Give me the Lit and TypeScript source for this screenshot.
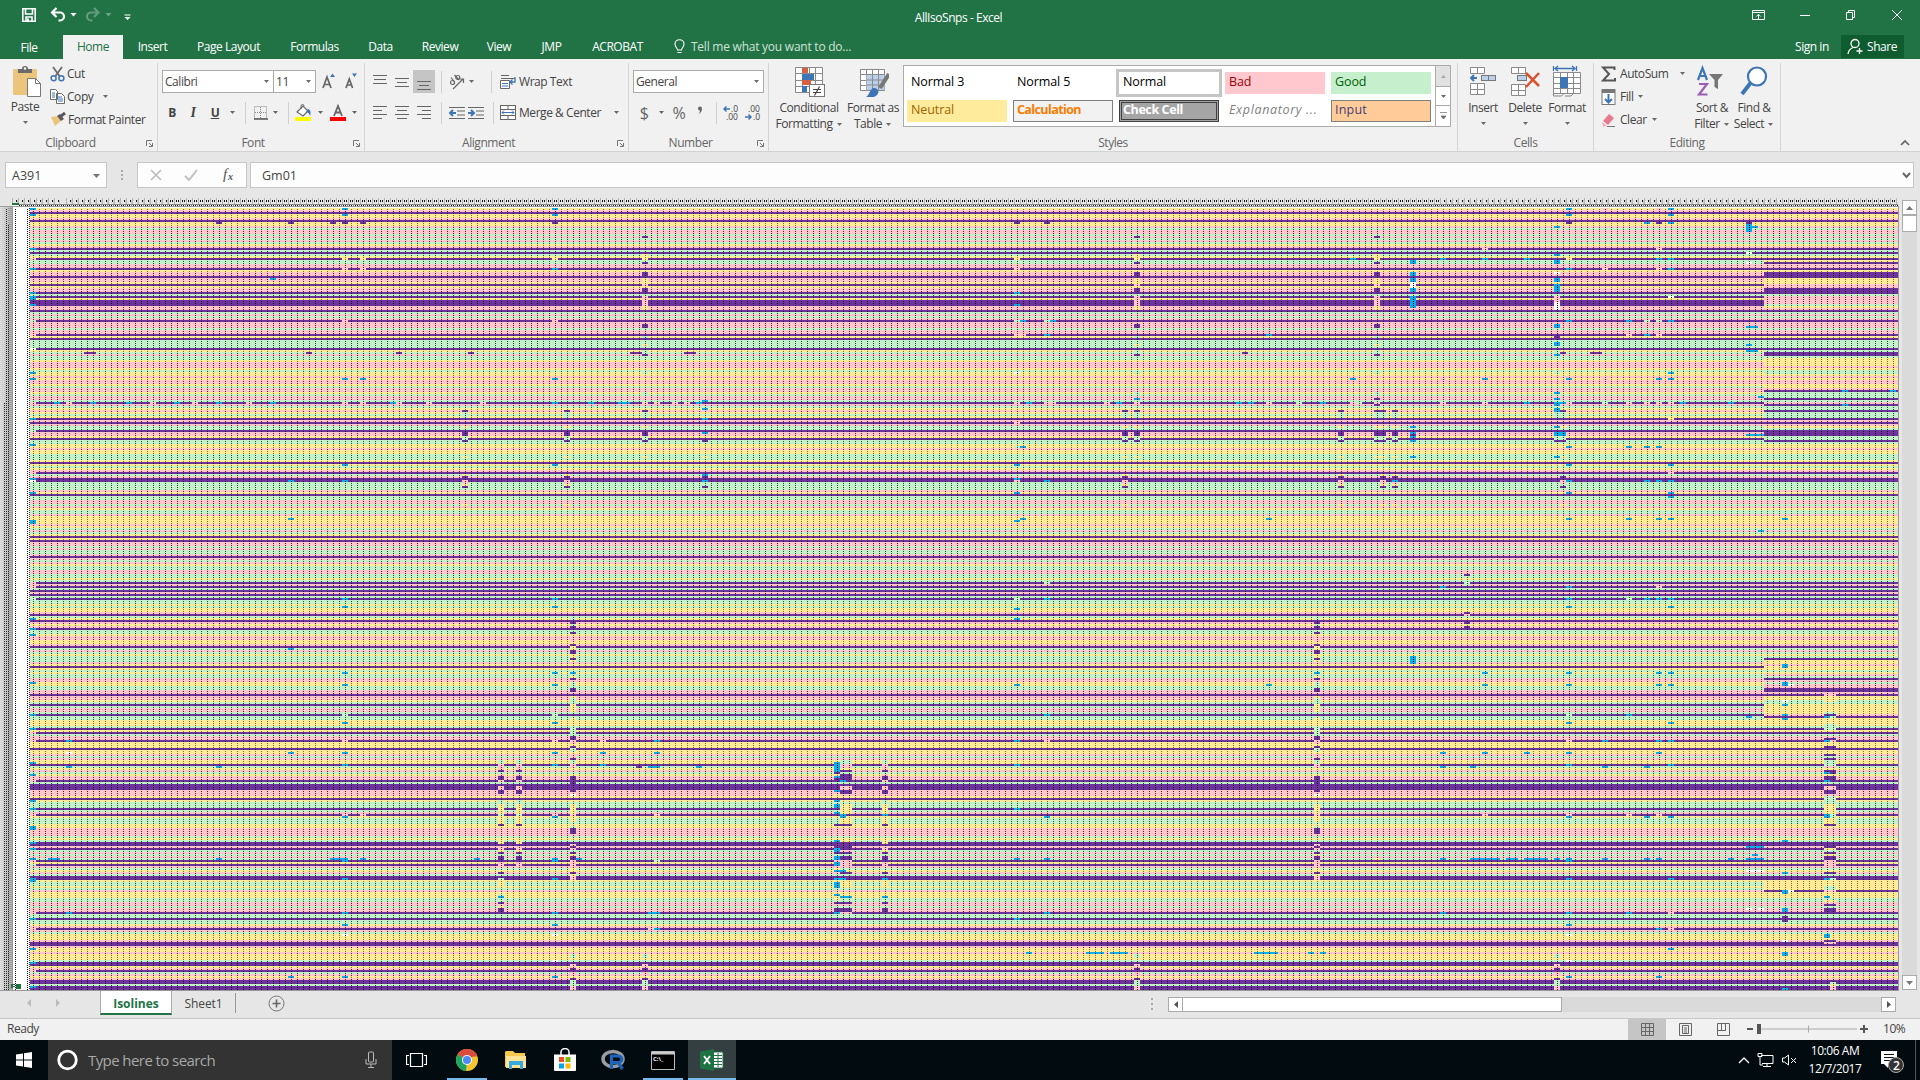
import { LitElement, html, css, svg } from "lit";
import { customElement } from "lit/decorators.js";

/* ---------- sheet data ---------- */
/* y neutral, k bad, g good, P purple fill, b blue fill, w blank */
const FILL: Record<string, [string, string]> = {
  y: ["#ffeb9c", "#9c6500"],
  k: ["#ffc7ce", "#9c0006"],
  g: ["#c6efce", "#006100"],
  P: ["#7030a0", "#000000"],
  b: ["#00b0f0", "#000000"],
  w: ["#ffffff", "#000000"],
};

const ROWS = (
  "ykPyykPyykgkkgkgkgykPgPgyPggkkPykkPkkyPykkPgPyPPPkkPgkgkPkkkgkkPyPggggPygkggykkkygyykykkygkkygkkgPkgykygyPkPkggPkkyPggyyk" +
  "yygggyPygykPgkPPggggkyPggkkgkyggkyyyykygkgyPyPkkgkggkPkgkyggkkggygPkPgPkPgPggygyykPgyPkykPggykkyykPgkgygggkyPygyggkkyyggkkPkkygPgkkgPgg" +
  "yyygPyPgkkPyyyPyykgkyyPgykgykkPgPPPkkkyPygggPgkPygggyykkkkgygPPkPgkgkgPyPkgykgPPyggygkyyyggkkgkkPggPggykPkgyyykPPkyykyyygPPykPgkykPPgPP"
).split("");

const RIGHT_COL = 289;
const COLS = 312;
const RIGHT: [number, string][] = [
  [26, "yPkkPyPPPyyykkPPPgkkkkgyk"],
  [71, "gPPgyyyykyggykykkyykPgggPgkPggPggg"],
  [108, "kygPPPggP"],
  [225, "Pyykyygykg"],
  [235, "PkgkkPPkPyyggyyyyykPyyyy"],
  [336, "yyyyyP"],
];

const BAND = "23y3 27P 32P2 35y3 38k 40P2 44k5 49y2";
const A = "101P 102g3 109y 112P2 114g2 116P 124y";
const B = A + " 133y 134P 136k2 138y 139P 148y";
const C = "14P " + BAND + " 58P2 64g 68y 71g 73P 82g 92g 97k " + A;
const TAIL = " 373g2 378k2 380P 382k 385P 386g3 389k2";
const D =
  " 204g2 207P 208g 209P 212P 214k3 218P 219y2 221P2 223y2 225P 226y 232b 234y 235P 237g2 240P2 244y 245g3 248y4 255y 259g5 264P2 266k2 269P 270g2 274k 275P 276g2 278k2 284P2 286P2 288P3 291P 293w 298y5 303k 304y3 309g 310P3 318k 319P 320k 322P 323y 324P2 326k3 330y 332P 333y 334k2";
const E = "276g2 278k2 280k 281P 283k 284P2 286k 289k2 291P2 296g 298y5 303g 305y3 308P 316y2 318P 320k 321y 322P 324P3 327k2";
const F = "276g2 278k2 281P 283P3 289k2 291P2 298y5 305y3 308P 316y 318P3 321k 322P 324P2 326k4 332P 336y3 344b 347P 350P2 352k";
const G = " 195b 199b 232b 238b 253g 257b 266k 272b 278b 303k 304b 325b2 335b 352b 358b 363w 376w 384b";

const MARKS: Record<number, string> = {
  0: "0b 3b 20b 25k 30b 42b 44b2 48b 56g 63k 70w 82b 85b 97k 105b 111g 118b 132k 135b 136w 142b 156b2 187k 189k 195g 205b 210b 213b 237b 253b 260b 262k 266k 277b 283b 286k 296b 300b 303k 309b2 317b 320b 325b 326k 328g 335b2 352k 355b 360k 370b 377b 381k 389b",
  3: "325b:2", 4: "97b", 6: "97k 266b 272w 279b 352b", 9: "72P:2", 10: "97b", 16: "97b", 20: "97k", 24: "97b", 27: "97k",
  31: "7P 97b 279b 325b", 36: "97k", 40: "35b 97b", 43: "7P 136b 155b 220b 272b 384b", 46: "72P", 50: "7P 325b:3",
  52: "0b 3b 7P 25y 30k 56k 85b 97k 128b 136b" + G, 55: "7P 25y 30k 85b 97k 303k 325b", 60: "97b", 61: "72P 97k", 66: "97k",
  72: B, 73: "72P", 74: "325b", 75: "97k", 78: E + " 332P 335g 336y3 343g 344b 347P 349y 350P2", 81: E,
  87: "0b 3b 7P 25y 30b 56k 85b 97b 128b" + G, 89: B, 90: D + TAIL, 91: "325b", 93: "97b", 95: "266k 272b 278b", 98: "97b:2",
  100: "72P:2", 101: "279P", 102: C + TAIL, 103: "279b:2 352b:2 360k", 104: "97k 266b 272b 303k 326g 360b",
  107: "97k", 109: "72P:2 97k", 111: "97b 279b", 112: "96b 100b 105b 112b 116P 124y 133b 134P 136b 139P",
  134: "277b6 282P 284b 285P 291b 293y 296b 298b2 302b 304y 308P 316b 319P 320b2 322P 324b2 326k 327b2 330y 331b:2 335b:2 337b3 343b 345y 347P 350P2 352b",
  135: F + " 286b 303b2", 136: F, 142: E + " 303b 332P 335b 336y3 344b 347P 350P2",
  164: "7P 25y 30k 42b 48b 56g 63k 82w 97k 107k 119g 128b 135b 136k 142b 156b 195g 200b 205b 238b 266b 278b 300b 325b 355b",
  165: "56b 63k 119b 155b", 166: "97b 372b",
  169: "7P 56g 63b 97k 136b 187g 195b 253b 266k 304b 325b 352b", 170: "56b 97k", 176: "372b:3", 179: "97k", 180: "372b:3", 181: "97b 372b",
  182: B, 184: C + " 95b" + TAIL, 201: "97b", 202: "72P", 203: "97b", 204: "372b:2", 206: "63b 97k 155b 238b 372b:2",
  211: "97g", 213: "372b", 214: D, 215: "97b 372b", 218: B, 220: "25b 85b 97k", 221: "97g", 224: C + " 95P 98P" + " 325y", 225: B, 227: B + " 136b",
  230: "26b2 32b2 35b2 37w3 40b2 44b6 109b 112b 113P 114b 116b 124b 224b4",
  235: "25b 85k 97k 189b 272b 279b 325b 352b", 239: "183P 187g2 202P 203k 207P 209P2", 240: "325b:2 279b",
  242: "20k 25b 85b 97k 232b 238b 272b 303k 325b:3", 246: "325b:2", 249: "25b 97b 272b 325b:4",
  254: "9b 23b 26b2 32w 35b2 38b2 40b2 44k3 47w4 58b2 64P 67b2 71g 73b 82g 92b 95b 97b 98b 100b2 102g3 109b 112b2 114g2 116P 124b 325b" + TAIL,
  255: "72P 97b 101P 102g3 109y 112b2 114g2 116P 124y 134P 136k2 139P 148y",
  256: "0b 3b 7P 25y 30b 56b 85b 97k 119b 128b 136b 142b 155b 189b" + G, 260: "72P:2",
  262: "0k 30k 85k 97g 266b 279b 325b", 266: "56b 63k 97k 119b 155b 195g 253b 303k 352b", 269: "7b 56g 63b 97k 119b 136b 195b 279b 304b 325b",
  271: "0k 7P 20k 25b 30k 56g 63k 85b 97k 119b 136b 155b 189k 195b 232b 238b 266b 272b 303k 325b 360b 384b",
  273: "0b 3b 7b 25b 30b 44w 56b 82b 85b 97k 105y 128b 132k 136b 142b 144b 155b 195b 199b 232b 238b 257b 266b 278b 304b 335b 352k 360k2 370b",
  275: "97b", 283: "97b 325b", 286: "7P 8b4 22w 27w 59b:2 68b 71b:2 113b:3 254b 319b:3 325b:3 331w:3 350w", 287: "9b 323b", 288: "94b 161b 350w",
  292: "155b 228b2 235P 237b2 246w 248b 253b 255b 316b 318P 332b 341b2 350b2 354P 356P 366w 372b2 390b", 293: "341w 238w",
  299: "243k:2 244y3:2 252g:2 253P2:2 254b 258g3:2 265P:2 266b 269P:2 273P:2 275P:2 276g3:2 279k:2 281P2:2 282b 284P2:2 286b 289k2:2 291P2:2 294g4:2 298y10:2 303b2 308P:2 319P:2 320y:2 322P:2 323y:2 324P2:2 326k3:2 332P:2 335b 339g3:2 341k:2 344b 346y:2 348P:2 350P2:2 363b2 366P:2 367k:2 368P:2",
  300: "254g 266k 303g2 335g 387g 388y 389k2", 302: "91b 98b", 310: "91b",
};

interface Block { c: number; r: number; w: number; h: number; k: string }

function runs(rows: string[], start: number, c: number, w: number): Block[] {
  const out: Block[] = [];
  rows.forEach((k, i) => {
    const last = out[out.length - 1];
    if (last && last.k === k) last.h++;
    else out.push({ c, r: start + i, w, h: 1, k });
  });
  return out;
}

function marks(): Block[] {
  const out: Block[] = [];
  for (const [c, text] of Object.entries(MARKS)) {
    for (const token of text.trim().split(/\s+/)) {
      const m = /^(\d+)([a-zA-Z])(\d*)(?::(\d+))?$/.exec(token);
      if (m) out.push({ c: +c, r: +m[1], k: m[2], h: +(m[3] || 1), w: +(m[4] || 1) });
    }
  }
  return out;
}

const BLOCKS: Block[] = [
  ...runs(ROWS.slice(0, 391), 0, 0, COLS),
  ...RIGHT.flatMap(([r, s]) => runs(s.split(""), r, RIGHT_COL, COLS - RIGHT_COL)),
  ...marks(),
];

const GREY = "#6a6a6a";
const BLUE = "#3e76b5";

const ic = (w: number, h: number, body: unknown) =>
  html`<svg class="ic" width=${w} height=${h} viewBox="0 0 ${w} ${h}">${body}</svg>`;
const car = (c = "#6a6a6a") => ic(7, 5, svg`<path d="M1 1h5L3.500 4z" fill=${c} />`);
const launch = () => html`<svg class="launch" width="9" height="9" viewBox="0 0 9 9"><path d="M1.500 7V1.500H7M4 4l3 3M7.500 4v3.500H4" fill="none" stroke="#777" /></svg>`;
const lines = (ys: number[], xs: [number, number][]) =>
  ic(16, 16, ys.map((y, i) => svg`<path d="M${xs[i % xs.length][0]} ${y + 0.5}H${xs[i % xs.length][1]}" stroke="#666" />`));

@customElement("sheet-map")
export class SheetMap extends LitElement {
  static styles = css`
    :host { display: block; }
    svg { display: block; }
  `;
  render() {
    return html`<svg width="1900" height="793" viewBox="0 0 1900 793" shape-rendering="crispEdges">
      <defs>
        <linearGradient id="rh"><stop offset="0" stop-color="#e6e6e6" /><stop offset="1" stop-color="#b4b4b4" /></linearGradient>
        ${Object.entries(FILL).map(([k, [bg, dot]]) => svg`
          <pattern id="p${k}" width="6" height="2" patternUnits="userSpaceOnUse" x="30" y="10">
            <rect width="6" height="2" fill=${bg} /><rect x="3" y="1" width="1" height="1" fill=${dot} />
          </pattern>`)}
        <pattern id="ch" width="6" height="10" patternUnits="userSpaceOnUse" x="12" y="0">
          <rect x="0" y="0" width="1" height="6" fill="#b4b4b4" /><rect x="5" y="2" width="1" height="4" fill="#cfcfcf" />
          <rect x="4" y="2" width="1" height="2" fill="#111" />
        </pattern>
        <pattern id="ch2" width="6" height="10" patternUnits="userSpaceOnUse" x="12" y="0">
          <rect x="0" y="0" width="1" height="6" fill="#b4b4b4" />
          <rect x="2" y="2" width="1" height="2" fill="#111" /><rect x="4" y="2" width="1" height="2" fill="#111" />
        </pattern>
        <pattern id="tr" width="6" height="4" patternUnits="userSpaceOnUse" x="12" y="7">
          <rect x="1" y="0" width="1" height="1" fill="#111" /><rect x="3" y="0" width="1" height="1" fill="#111" /><rect x="5" y="0" width="1" height="1" fill="#777" />
        </pattern>
        <pattern id="rt" width="13" height="2" patternUnits="userSpaceOnUse" y="10">
          <rect width="12" height="1" fill="#bdbdbd" opacity=".5" /><rect x="8" width="4" height="1" fill="#999" /><rect x="6" y="1" width="1" height="1" fill="#222" />
        </pattern>
        <pattern id="rt2" width="13" height="2" patternUnits="userSpaceOnUse" y="10">
          <rect x="8" y="1" width="1" height="1" fill="#222" />
        </pattern>
        <pattern id="rt3" width="13" height="2" patternUnits="userSpaceOnUse" y="10">
          <rect x="4" y="1" width="1" height="1" fill="#222" />
        </pattern>
        <pattern id="wd" width="18" height="2" patternUnits="userSpaceOnUse" x="13" y="10">
          <rect x="2" y="1" width="1" height="1" fill="#111" /><rect x="14" y="1" width="1" height="1" fill="#111" /><rect x="16" y="0" width="1" height="1" fill="#333" />
        </pattern>
      </defs>
      <rect x="12" y="0" width="1886" height="6" fill="#e6e6e6" />
      <rect x="12" y="0" width="48" height="6" fill="url(#ch)" />
      <rect x="66" y="0" width="102" height="6" fill="url(#ch)" />
      <rect x="168" y="0" width="1272" height="6" fill="url(#ch2)" />
      <rect x="1440" y="0" width="340" height="6" fill="url(#ch)" />
      <rect x="1780" y="0" width="118" height="6" fill="url(#ch2)" />
      <rect x="12" y="5" width="7" height="2" fill="#217346" />
      <rect x="19" y="6" width="1879" height="1" fill="#888" />
      <rect x="13" y="7" width="1885" height="1" fill="#fff" />
      <rect x="19" y="7" width="1879" height="1" fill="url(#tr)" />
      <rect x="0" y="8" width="1899" height="1" fill="#999" />
      <rect x="0" y="9" width="13" height="783" fill="url(#rh)" />
      <rect x="0" y="10" width="12" height="782" fill="url(#rt)" />
      <rect x="0" y="26" width="12" height="766" fill="url(#rt2)" />
      <rect x="0" y="204" width="12" height="588" fill="url(#rt3)" />
      <rect x="12" y="9" width="1" height="783" fill="#999" />
      <rect x="13" y="9" width="1885" height="783" fill="#fff" />
      <rect x="13" y="10" width="17" height="782" fill="url(#wd)" />
      ${BLOCKS.map((b) => svg`<rect x=${30 + b.c * 6} y=${10 + b.r * 2} width=${Math.min(b.w * 6, 1898 - 30 - b.c * 6)} height=${b.h * 2} fill="url(#p${b.k})" />`)}
      <rect x="1898" y="8" width="1" height="784" fill="#999" />
      <path d="M11 786h4v1h-2v1h2v1h-2v1h-2z" fill="#217346" />
      <rect x="16" y="786" width="5" height="5" fill="#217346" />
      <rect x="0" y="792" width="1899" height="1" fill="#999" />
    </svg>`;
  }
}

@customElement("app-root")
export class AppRoot extends LitElement {
  static styles = css`
    :host { display: block; width: 1920px; height: 1080px; overflow: hidden; background: #e6e6e6; color: #444;
      font: 12px/16px "Open Sans", "Noto Sans", sans-serif; letter-spacing: -0.45px; white-space: nowrap; }
    * { box-sizing: border-box; }
    .ic, .launch { display: block; flex: none; }
    svg text { letter-spacing: 0; }
    .row { display: flex; align-items: center; }
    .col { display: flex; flex-direction: column; align-items: center; }
    .top { background: #217346; height: 59px; color: #fff; }
    .title { height: 35px; display: grid; grid-template-columns: 140px 1600px 180px; align-items: center; }
    .title .name { text-align: center; padding-left: 37px; }
    .tabs { display: flex; height: 24px; align-items: center; }
    .tab { text-align: center; flex: none; height: 24px; line-height: 24px; }
    .t0 { width: 63px; padding-right: 5px; line-height: 26px; } .t1 { width: 60px; background: #f1f1f1; color: #217346; }
    .t2 { width: 59px; } .t3 { width: 93px; } .t4 { width: 79px; } .t5 { width: 53px; } .t6 { width: 66px; }
    .t7 { width: 52px; } .t8 { width: 53px; } .t9 { width: 79px; }
    .bulb { margin-left: 17px; } .tell { margin-left: 6px; color: #cfe3d7; width: 1104px; letter-spacing: -.24px; }
    .sign { width: 46px; } .share { background: #0e5c2f; width: 63px; height: 23px; align-self: flex-start; gap: 3px; padding-left: 6px; }
    .ribbon { display: flex; height: 93px; background: #f1f1f1; border-bottom: 1px solid #d2d2d2; }
    .group { position: relative; flex: none; height: 88px; margin-top: 4px; border-right: 1px solid #d5d5d5; display: flex; flex-direction: column; }
    .body { height: 71px; display: flex; }
    .label { text-align: center; color: #666; line-height: 17px; padding-top: 2px; }
    .launch { position: absolute; right: 3px; bottom: 3px; }
    .g1 { width: 158px; } .g2 { width: 207px; } .g3 { width: 264px; } .g4 { width: 140px; } .g5 { width: 689px; } .g6 { width: 136px; } .g7 { width: 187px; }
    .g1 .label, .g2 .label, .g3 .label, .g4 .label { padding-right: 16px; }
    .paste { width: 50px; padding-top: 2px; } .paste .ic:last-child { margin-top: 5px; }
    .stack { display: flex; flex-direction: column; margin-top: -1px; }
    .stack .row { height: 23px; gap: 2px; }
    .two { flex-direction: column; padding: 7px 0 0 4px; gap: 8px; }
    .two .row { height: 23px; }
    .box { height: 23px; border: 1px solid #ababab; background: #fff; display: flex; align-items: center; justify-content: space-between; padding: 0 3px 0 2px; }
    .b1 { width: 112px; } .b2 { width: 43px; margin-left: -1px; } .b3 { width: 131px; }
    .vs { width: 1px; height: 22px; background: #d0d0d0; flex: none; }
    .k { display: flex; justify-content: center; align-items: center; flex: none; height: 23px; }
    .w13 { width: 13px; } .w17 { width: 17px; } .w20 { width: 20px; } .w22 { width: 22px; }
    .sep2 { padding-left: 5px; }
    .on { background: #c5c5c5; }
    .bold { font-weight: 700; } .it { font-style: italic; font-weight: 600; font-family: "Liberation Serif", serif; font-size: 14px; } .un { text-decoration: underline; font-weight: 700; }
    .big { font-size: 16px; color: #666; }
    .lt { margin-left: 2px; } .cp { width: 5px; }
    .mc { width: 94px; }
    .btn { display: flex; flex-direction: column; align-items: center; padding-top: 2px; text-align: center; flex: none; }
    .btn .ic:first-child { margin-bottom: 3px; }
    .btn .row { gap: 3px; }
    .btn .row .ic { margin: 0; }
    .cf { width: 80px; } .ft { width: 48px; margin-right: 6px; }
    .gal { display: grid; grid-template-columns: repeat(5, 100px) 15px; column-gap: 6px; grid-template-rows: 22px 22px; row-gap: 6px; width: 548px; height: 62px; margin-top: 2px; padding: 6px 0 0 3px; border: 1px solid #ababab; background: #fff; font-size: 12.5px; letter-spacing: -.1px; color: #000; overflow: hidden; }
    .gal div { padding-left: 4px; line-height: 20px; }
    .gal .sc { grid-row: 1 / 3; grid-column: 6; padding: 0; margin: -6px 0 0 -2px; width: 16px; height: 60px; border-left: 1px solid #ababab; display: grid; grid-template-rows: 21px 19px 20px; }
    .gal .sc span { display: flex; align-items: center; justify-content: center; border-bottom: 1px solid #ababab; }
    .gal .sc span:last-child { border-bottom: 0; }
    .gal .sc span:first-child { background: #e1e1e1; }
    .gal .sc .ic { margin: 0; }
    .gal .sel { outline: 3px solid #c5c5c5; outline-offset: 0; }
    .bad { background: #ffc7ce; color: #9c0006; } .good { background: #c6efce; color: #006100; } .neu { background: #ffeb9c; color: #9c6500; }
    .gal .calc { border: 1px solid #7f7f7f; background: #f2f2f2; color: #fa7d00; font-weight: 700; padding-left: 3px; letter-spacing: -.6px; line-height: 18px; }
    .gal .chk { border: 3px double #3f3f3f; background: #a5a5a5; color: #fff; font-weight: 700; padding-left: 1px; letter-spacing: -.4px; line-height: 14px; }
    .gal .exp { color: #7f7f7f; font-style: italic; letter-spacing: .65px; } .gal .inp { border: 1px solid #7f7f7f; background: #ffcc99; color: #3f3f76; line-height: 18px; padding-left: 3px; letter-spacing: .2px; }
    .g6 .body { padding-left: 4px; } .g6 .btn { width: 42px; } .g6 .btn .ic:last-child { margin-top: 5px; }
    .ed { width: 97px; padding-left: 7px; } .ed .row { gap: 4px; }
    .ed .far { margin-left: 7px; }
    .g7 .btn { width: 42px; }
    .rest { flex: 1; display: flex; align-items: flex-end; justify-content: flex-end; padding: 0 10px 5px 0; }
    .fbar { display: flex; height: 46px; padding: 10px 6px 0 5px; }
    .fbar .f { height: 26px; border: 1px solid #c6c6c6; background: #fdfdfd; display: flex; align-items: center; font-size: 12.5px; letter-spacing: 0; }
    .nb { width: 102px; justify-content: space-between; padding: 1px 5px 0 6px; } .dots { width: 30px; height: 26px; } .fx { width: 110px; justify-content: space-between; padding: 0 9px 0 12px; }
    .fv { margin-left: 3px; width: 1664px; padding: 1px 2px 0 11px; justify-content: space-between; }
    .main { display: flex; height: 793px; }
    .vsb { width: 16px; margin-left: 2px; padding-top: 2px; display: flex; flex-direction: column; background: #e6e6e6; height: 792px; }
    .sb { border: 1px solid #ababab; background: #fff; width: 15px; height: 15px; display: flex; align-items: center; justify-content: center; flex: none; }
    .vt { width: 15px; height: 17px; border: 1px solid #ababab; background: #fff; } .tr { width: 15px; flex: 1; background: #dadada; }
    .sheets { display: flex; height: 27px; }
    .nav { width: 100px; height: 25px; padding: 0 39px 0 26px; justify-content: space-between; }
    .st { height: 24px; text-align: center; line-height: 25px; }
    .s1 { width: 72px; background: #fff; border: solid #ababab; border-width: 0 1px; border-bottom: 2px solid #217346; color: #217346; font-weight: 700; letter-spacing: 0; }
    .s2 { width: 64px; border-right: 1px solid #999; margin-top: 2px; line-height: 21px; height: 20px; letter-spacing: -.1px; } .add { margin: 4px 0 0 32px; width: 882px; }
    .hs { display: flex; padding-top: 6px; } .hs .dots2 { width: 18px; }
    .ht { width: 380px; height: 15px; border: 1px solid #ababab; background: #fff; margin-left: -1px; } .hr { width: 319px; height: 15px; background: #dadada; }
    .status { display: flex; align-items: center; height: 22px; border-top: 1px solid #c6c6c6; background: #f1f1f1; padding: 0 0 1px 7px; }
    .status .rd { width: 1621px; } .vb { width: 38px; height: 21px; display: flex; justify-content: center; align-items: center; }
    .zoom { margin: 0 11px 0 3px; }
    .task { display: flex; height: 40px; background: #020c10; color: #fff; }
    .task .c { display: flex; align-items: center; justify-content: center; height: 40px; flex: none; }
    .start { width: 48px; } .search { width: 344px; background: #333; color: #a8a8a8; font-size: 15px; letter-spacing: -.58px; padding-left: 9px; gap: 10px; }
    .search .ph { width: 267px; }
    .a { width: 49px; } .a0 { width: 50px; margin-right: 1px; margin-left: -1px; } .a.run { box-shadow: inset 0 -2px #76b9ed; width: 40px; margin: 0 4px 0 5px; }
    .xl { box-shadow: inset 0 -2px #76b9ed; background: #343f42; width: 48px; margin-left: 1px; }
    .gap { flex: 1; } .tray { gap: 6px; } .clock { text-align: center; line-height: 18px; width: 72px; padding-top: 2px; }
    .nt { width: 44px; padding-right: 3px; } .end { width: 5px; border-left: 1px solid #555; }
  `;

  private grid(w: number, h: number, n: number, m: number, x = 0, y = 0) {
    const d: string[] = [];
    for (let i = 0; i <= n; i++) d.push(`M${x + 0.5 + Math.round((i * (w - 1)) / n)} ${y + 0.5}v${h - 1}`);
    for (let i = 0; i <= m; i++) d.push(`M${x + 0.5} ${y + 0.5 + Math.round((i * (h - 1)) / m)}h${w - 1}`);
    return svg`<rect x=${x + 0.5} y=${y + 0.5} width=${w - 1} height=${h - 1} fill="#fff" /><path d=${d.join("")} stroke="#8a8a8a" fill="none" />`;
  }

  private titleBar() {
    return html`<div class="title">
      ${ic(140, 35, svg`<g fill="none" stroke="#fff" stroke-width="1.600">
        <path d="M22.800 8.800h12.400v12.400H22.800zM25.500 9v5h7V9M26 21v-4h6v4" /><path d="M28 18.500v2.500" stroke-width="2" />
        <path d="M56.500 8L52 12.500l4.500 4.500M52.500 12.500h7.500a4 4 0 0 1 0 8h-1.500" stroke-width="2.200" />
        <path d="M94 8l4.500 4.500L94 17M98 12.500h-7a4 4 0 0 0 0 8h1.500" stroke-width="2.200" opacity=".3" /></g>
        <path d="M70.500 13h6l-3 3.500z" fill="#fff" /><path d="M105.500 13h6l-3 3.500z" fill="#fff" opacity=".35" />
        <path d="M124.500 14.500h6v1h-6zM124.500 17h6l-3 3z" fill="#fff" />`)}
      <div class="name">AllIsoSnps - Excel</div>
      ${ic(180, 35, svg`<g fill="none" stroke="#fff">
        <path d="M12.500 10.500h12v9h-12zM12.500 12.500h12M18.500 19v-4.500M16.300 16.500l2.200-2.200 2.200 2.200" />
        <path d="M60 15.500h10M106.500 12.500h6v7h-6zM108.500 12.500v-2h6v7h-2M152 10l10 10M162 10l-10 10" /></g>`)}
    </div>`;
  }

  private tabBar() {
    const names = ["File", "Home", "Insert", "Page Layout", "Formulas", "Data", "Review", "View", "JMP", "ACROBAT"];
    return html`<div class="tabs">
      ${names.map((n, i) => html`<div class="tab t${i}">${n}</div>`)}
      <div class="bulb">${ic(11, 16, svg`<path d="M3.500 11c0-2-2.500-2.800-2.500-6a4.500 4.300 0 0 1 9 0c0 3.200-2.500 4-2.500 6zM3.500 13.500h4" fill="none" stroke="#fff" stroke-width="1.100" />`)}</div>
      <div class="tell">Tell me what you want to do...</div>
      <div class="sign">Sign in</div>
      <div class="row share">${ic(17, 17, svg`<g fill="none" stroke="#fff" stroke-width="1.300"><circle cx="8" cy="5.500" r="4" /><path d="M1 16c.5-4 2.500-5.500 5-6.500M9.500 13h6M12.500 10v6" /></g>`)}<span>Share</span></div>
    </div>`;
  }

  private clipboard() {
    return html`<div class="group g1"><div class="body">
      <div class="col paste">
        ${ic(32, 34, svg`<rect x="4" y="4" width="24" height="26" rx="1" fill="#ecc57c" /><path d="M9 8V4h4a3 3 0 0 1 6 0h4v4z" fill="#6a6a6a" /><circle cx="16" cy="3.500" r="1.200" fill="#fff" /><path d="M18.500 13.500h8l5 5v13h-13z" fill="#fff" stroke="#777" /><path d="M26.500 13.500v5h5" fill="none" stroke="#777" />`)}
        <span>Paste</span>${car()}</div>
      <div class="stack">
        <div class="row">${ic(15, 16, svg`<path d="M3 1l6.500 9M12 1L5.500 10" stroke="#6a6a6a" stroke-width="1.800" /><g fill="none" stroke=${BLUE} stroke-width="1.500"><circle cx="3.600" cy="12.200" r="2.500" /><circle cx="11.400" cy="12.200" r="2.500" /></g>`)}<span>Cut</span></div>
        <div class="row">${ic(15, 15, svg`<g fill="#fff" stroke="#6a6a6a"><path d="M.5.500h5l2 2v8h-7zM6.500 4.500h5l3 3v7h-8z" /></g><path d="M2 4h3M2 6h3M2 8h3M8 8h4M8 10h5M8 12h5" stroke=${BLUE} />`)}<span>Copy</span><span class="cp"></span>${car()}</div>
        <div class="row">${ic(16, 15, svg`<path d="M1 5l7-1 3 5-6 5z" fill="#ecc57c" /><path d="M7 4l3-2 4 5-3 2z" fill="#5a5a5a" /><path d="M11 4l4-3" stroke="#5a5a5a" stroke-width="3" />`)}<span>Format Painter</span></div>
      </div></div><div class="label">Clipboard</div>${launch()}</div>`;
  }

  private fontGroup() {
    return html`<div class="group g2"><div class="body two">
      <div class="row"><div class="box b1"><span>Calibri</span>${car()}</div><div class="box b2"><span>11</span>${car()}</div>
        ${ic(46, 20, svg`<g fill="none" stroke="#666" stroke-width="1.700"><path d="M7 16l4-11 4 11M8.500 12.500h5M30 16l3.300-9 3.300 9M31.200 13h4.200" /></g><path d="M14 5l2.500-3.500L19 5zM36 1.500h5L38.500 5z" fill=${BLUE} />`)}</div>
      <div class="row"><span class="k w20 bold">B</span><span class="k w22 it">I</span><span class="k w22 un">U</span><span class="k w13">${car()}</span><span class="k w13"><i class="vs"></i></span>
        <span class="k w17">${ic(14, 14, svg`<rect x=".5" y=".5" width="12" height="12" fill="none" stroke="#888" stroke-dasharray="1 1" /><path d="M6.500 1v11M1 6.500h11" stroke="#888" stroke-dasharray="1 1" /><path d="M0 13h14" stroke="#555" stroke-width="1.500" />`)}</span><span class="k w13">${car()}</span><span class="k w13"><i class="vs"></i></span>
        <span class="k w17">${ic(17, 17, svg`<path d="M2 8l6-6 5 5-5 5z" fill="#fff" stroke="#666" stroke-width="1.200" /><path d="M6 5V2a1.500 1.500 0 0 1 3 0" fill="none" stroke="#666" /><path d="M13 5c3 1 3 4 2 7-1-3-2-4-4-4z" fill=${BLUE} /><rect y="13" width="16" height="4" fill="#ff0" />`)}</span><span class="k w17">${car()}</span>
        <span class="k w17">${ic(16, 17, svg`<path d="M4 12L8 2l4 10M5.500 8.500h5" fill="none" stroke="#666" stroke-width="1.800" /><rect y="13" width="16" height="4" fill="#f00" />`)}</span><span class="k w17">${car()}</span></div>
    </div><div class="label">Font</div>${launch()}</div>`;
  }

  private alignmentGroup() {
    return html`<div class="group g3"><div class="body two">
      <div class="row"><span class="k w22">${lines([1, 5, 9], [[1, 15], [2, 14]])}</span><span class="k w22">${lines([4, 8, 12], [[1, 15], [3, 13]])}</span><span class="k w22 on">${lines([7, 11, 15], [[1, 15], [3, 13]])}</span>
        <span class="k w13"><i class="vs"></i></span><span class="k w17">${ic(17, 18, svg`<g fill="none" stroke="#666" stroke-width="1.200"><circle cx="4.500" cy="9.500" r="2" /><path d="M3 4.500l4 5" /><path d="M6.500 2l4.500 5" /><circle cx="9.800" cy="4.500" r="2" /><path d="M5 16L15 6M11.500 6H15.500v4" /></g>`)}</span><span class="k w13">${car()}</span><span class="k w22 sep2"><i class="vs"></i></span>
        ${ic(17, 16, svg`<path d="M1 1.500h8M1 4.500h14" stroke="#666" /><path d="M15 3v5h-5M12.500 5.500L10 8l2.500 2.500" stroke=${BLUE} fill="none" stroke-width="1.300" /><path d="M.5 6.500h9v8h-9z" fill="#fff" stroke="#666" /><path d="M2 9.500h6M2 12h6" stroke=${BLUE} />`)}<span class="lt">Wrap Text</span></div>
      <div class="row"><span class="k w22">${lines([1, 5, 9, 13], [[1, 15], [1, 10]])}</span><span class="k w22">${lines([1, 5, 9, 13], [[1, 15], [3, 13]])}</span><span class="k w22">${lines([1, 5, 9, 13], [[1, 15], [6, 15]])}</span>
        <span class="k w13"><i class="vs"></i></span><span class="k w17">${ic(16, 14, svg`<path d="M0 1.500h16M8 5h8M8 9h8M0 12.500h16" stroke="#666" /><path d="M7 7H1M4 4L1 7l3 3" stroke=${BLUE} stroke-width="2" fill="none" />`)}</span><span class="k w22">${ic(16, 14, svg`<path d="M0 1.500h16M8 5h8M8 9h8M0 12.500h16" stroke="#666" /><path d="M0 7h6M3 4l3 3-3 3" stroke=${BLUE} stroke-width="2" fill="none" />`)}</span><span class="k w13"><i class="vs"></i></span>
        ${ic(17, 16, svg`<rect x=".5" y=".5" width="15" height="14" fill="#fff" stroke="#666" /><path d="M0 4.500h16M0 10.500h16M8 0v4M8 11v4" stroke="#666" /><path d="M2 7.500h12M4 5.500l-2 2 2 2M12 5.500l2 2-2 2" stroke=${BLUE} fill="none" />`)}<span class="lt mc">Merge &amp; Center</span>${car()}</div>
    </div><div class="label">Alignment</div>${launch()}</div>`;
  }

  private numberGroup() {
    return html`<div class="group g4"><div class="body two">
      <div class="row"><div class="box b3"><span>General</span>${car()}</div></div>
      <div class="row"><span class="k w22 big">$</span><span class="k w13">${car()}</span><span class="k w22 big">%</span><span class="k w20">${ic(6, 16, svg`<path d="M1 3.500a2 2 0 1 1 4 0c0 3-1.500 4.500-3.500 5.500C2.500 8 3 7 2.800 5.500A2 2 0 0 1 1 3.500z" fill="#666" />`)}</span><span class="k w13"><i class="vs"></i></span>
        ${ic(46, 18, svg`<g font-size="8.500" fill="#444"><text x="8" y="8">.0</text><text x="3" y="16">.00</text><text x="25" y="8">.00</text><text x="30" y="16">.0</text></g><path d="M7 5H1M3.500 2.500L1 5l2.500 2.500M22 13h6M25.500 10.500L28 13l-2.500 2.500" stroke=${BLUE} fill="none" stroke-width="1.500" />`)}</div>
    </div><div class="label">Number</div>${launch()}</div>`;
  }

  private stylesGroup() {
    return html`<div class="group g5"><div class="body">
      <div class="btn cf">${ic(32, 32, svg`${this.grid(28, 26, 4, 4, 2, 2)}<path d="M9 3h6v5h-6zM9 15h9v5h-9z" fill="#d9603f" /><path d="M9 9h12v6h-12zM9 21h5v6h-5z" fill=${BLUE} /><rect x="16.500" y="19.500" width="15" height="12" fill="#fff" stroke="#777" /><path d="M20 24.500h8M20 27.500h8M26.500 21.500l-5 9" stroke="#444" stroke-width="1.200" />`)}
        <span>Conditional</span><span class="row">Formatting ${car()}</span></div>
      <div class="btn ft">${ic(32, 32, svg`${this.grid(25, 22, 4, 4, 3, 4)}<rect x="9.500" y="10" width="18" height="15" fill="#bcd0ea" /><path d="M15.500 10v15M21.500 10v15M10 15h17M10 20h17" stroke="#8a8a8a" /><path d="M32 9l-9 14" stroke="#777" stroke-width="4" /><path d="M9 32c3-1 4-9 8-9s6 4 3 7-8 3-11 2z" fill=${BLUE} />`)}
        <span>Format as</span><span class="row">Table ${car()}</span></div>
      <div class="gal"><div>Normal 3</div><div>Normal 5</div><div class="sel">Normal</div><div class="bad">Bad</div><div class="good">Good</div>
        <div class="neu">Neutral</div><div class="calc">Calculation</div><div class="chk">Check Cell</div><div class="exp">Explanatory ...</div><div class="inp">Input</div>
        <div class="sc"><span>${ic(7, 5, svg`<path d="M1 4h5L3.500 1z" fill="#aaa" />`)}</span><span>${car()}</span><span>${ic(7, 8, svg`<path d="M0 .5h7M1 4h5L3.500 7z" fill=${GREY} stroke=${GREY} stroke-width=".7" />`)}</span></div></div>
    </div><div class="label">Styles</div></div>`;
  }

  private cellsGroup() {
    return html`<div class="group g6"><div class="body">
      <div class="btn">${ic(30, 32, svg`${this.grid(15, 7, 2, 1, 2, 2)}${this.grid(15, 12, 2, 2, 2, 18)}<rect x="13.500" y="10.500" width="14" height="5" fill="#bcd0ea" stroke="#777" /><path d="M20.500 10v5" stroke="#777" /><path d="M9 13H3M6 10l-3 3 3 3" stroke=${BLUE} fill="none" stroke-width="2" />`)}<span>Insert</span>${car()}</div>
      <div class="btn">${ic(32, 32, svg`${this.grid(15, 7, 2, 1, 2, 2)}${this.grid(15, 12, 2, 2, 2, 19)}<rect x="8.500" y="10.500" width="9" height="5" fill="#bcd0ea" stroke="#777" /><path d="M17 8l13 13M30 8L17 22" stroke="#d9522f" stroke-width="2.500" />`)}<span>Delete</span>${car()}</div>
      <div class="btn">${ic(30, 32, svg`${this.grid(28, 22, 4, 4, 1, 7)}<rect x="8" y="12" width="8" height="11" fill=${BLUE} /><path d="M1.500 1v5M24.500 1v5M3 3.500h20M6 1L3 3.500 6 6M20 1l3 2.500L20 6" stroke=${BLUE} fill="none" stroke-width="1.300" /><path d="M1.500 28v3h8l3-3M13 31h6l3-3" fill="none" stroke="#888" />`)}<span>Format</span>${car()}</div>
    </div><div class="label">Cells</div></div>`;
  }

  private editing() {
    return html`<div class="group g7"><div class="body">
      <div class="stack ed">
        <div class="row">${ic(15, 16, svg`<path d="M13.500 4V1.500H2L8 8l-6 6.500h12V12" fill="none" stroke="#555" stroke-width="2" />`)}<span>AutoSum</span><span class="far">${car()}</span></div>
        <div class="row">${ic(15, 16, svg`<rect x="1" y=".5" width="13" height="15" fill="#fff" stroke="#777" /><rect x="1" width="13" height="4" fill="#777" /><path d="M7.500 5v8M4 10l3.500 3.500L11 10" stroke=${BLUE} stroke-width="2" fill="none" />`)}<span>Fill</span>${car()}</div>
        <div class="row">${ic(15, 14, svg`<path d="M2 8l6-7 5 4-6 7z" fill="#e6798c" /><path d="M1 9l5 4-4 .5z" fill="#f0a9b5" /><path d="M6 13.500h8" stroke="#777" />`)}<span>Clear</span>${car()}</div>
      </div>
      <div class="btn">${ic(32, 32, svg`<g fill="none" stroke-width="2.200"><path d="M2 15L6.500 3 11 15M3.500 11h6" stroke=${BLUE} /><path d="M3 19h8L3 29.500h8.500" stroke="#9a5fb5" /></g><path d="M13 9h14l-5 6v9l-3.500-2V15z" fill="#777" />`)}<span>Sort &amp;</span><span class="row">Filter ${car()}</span></div>
      <div class="btn">${ic(30, 32, svg`<circle cx="18" cy="11.500" r="9" fill="#fff" stroke=${BLUE} stroke-width="2.200" /><path d="M11.500 18L3 29" stroke=${BLUE} stroke-width="4" />`)}<span>Find &amp;</span><span class="row">Select ${car()}</span></div>
    </div><div class="label">Editing</div></div>`;
  }

  private formulaBar() {
    return html`<div class="fbar">
      <div class="f nb"><span>A391</span>${ic(9, 6, svg`<path d="M1 1h7L4.500 5z" fill="#777" />`)}</div>
      <div class="dots">${ic(30, 26, svg`<path d="M14 8h2v2h-2zM14 12h2v2h-2zM14 16h2v2h-2z" fill="#aaa" />`)}</div>
      <div class="f fx">${ic(12, 12, svg`<path d="M1 1l10 10M11 1L1 11" stroke="#bbb" stroke-width="1.600" />`)}${ic(14, 12, svg`<path d="M1 7l4 4 8-10" fill="none" stroke="#c0c0c0" stroke-width="2" />`)}${ic(17, 18, svg`<g font-family="Liberation Serif, serif" font-style="italic" fill="#555"><text x="3" y="13" font-size="15">f</text><text x="8" y="14" font-weight="700" font-size="10">x</text></g>`)}</div>
      <div class="f fv"><span>Gm01</span>${ic(9, 7, svg`<path d="M1 1l3.500 4L8 1" fill="none" stroke="#666" stroke-width="2" />`)}</div>
    </div>`;
  }

  private taskbar() {
    return html`<div class="task">
      <div class="c start">${ic(16, 16, svg`<path d="M0 2.500l7-1v6H0zM8 1.300L16 0v7.500H8zM0 8.500h7v6l-7-1zM8 8.500h8V16l-8-1.300z" fill="#fff" />`)}</div>
      <div class="row search">${ic(21, 22, svg`<circle cx="10.500" cy="11" r="8.800" fill="none" stroke="#fff" stroke-width="2.800" />`)}<span class="ph">Type here to search</span>${ic(12, 18, svg`<rect x="3.500" y="1" width="5" height="10" rx="1" fill="none" stroke="#bbb" /><path d="M1 8v5h10V8M6 13v4M3 16.500h6" fill="none" stroke="#bbb" />`)}</div>
      <div class="c a0">${ic(21, 16, svg`<path d="M4.500 1.500h12v13h-12zM3 3.500H.5v9H3M18 3.500h2.500v9H18" fill="none" stroke="#fff" stroke-width="1.200" />`)}</div>
      <div class="c a run">${ic(24, 24, svg`<circle cx="12" cy="12" r="11" fill="#f4c430" /><path d="M12 12L2.500 6.500A11 11 0 0 1 21.500 6.500z" fill="#dd4b3e" /><path d="M12 12L2.500 6.500A11 11 0 0 0 11 23z" fill="#1da362" /><path d="M12 7h9.700" stroke="#dd4b3e" stroke-width="3" /><circle cx="12" cy="12" r="5" fill="#fff" /><circle cx="12" cy="12" r="4" fill="#4c8bf5" />`)}</div>
      <div class="c a">${ic(22, 20, svg`<path d="M0 2l1-1h7l2 2h10v14H0z" fill="#f5c84c" /><path d="M1 6h20v12H1z" fill="#fde398" /><path d="M4 19v-8h14v8h-3v-4H7v4z" fill="#38a9e0" />`)}</div>
      <div class="c a">${ic(24, 24, svg`<path d="M8 8V4a4 3.500 0 0 1 8 0v4" fill="none" stroke="#fff" stroke-width="1.500" /><path d="M1 6.500h22V22a1 1 0 0 1-1 1H2a1 1 0 0 1-1-1z" fill="#fff" /><path d="M6 9h5v5H6z" fill="#f25022" /><path d="M12.500 9h5v5h-5z" fill="#7fba00" /><path d="M6 15.500h5v5H6z" fill="#00a4ef" /><path d="M12.500 15.500h5v5h-5z" fill="#ffb900" />`)}</div>
      <div class="c a">${ic(26, 22, svg`<ellipse cx="12" cy="10" rx="10" ry="7.500" fill="none" stroke="#9a9da3" stroke-width="3.500" /><path d="M10.500 20V7h7a3.200 3.200 0 0 1 0 6.500h-6M17 13.500l4.500 6.500" fill="none" stroke="#1f64b8" stroke-width="3.200" />`)}</div>
      <div class="c a run">${ic(24, 19, svg`<path d="M.5.500h23v18H.5z" fill="#000" stroke="#bbb" /><path d="M1 1h22v2.500H1z" fill="#ccc" /><text x="2" y="10" font-size="6" font-weight="700" fill="#fff">C:\\_</text>`)}</div>
      <div class="c xl">${ic(24, 22, svg`<path d="M13 3h10v16H13z" fill="#fff" stroke="#1f7244" /><path d="M14 6.500h8M14 9.500h8M14 12.500h8M14 15.500h8M18 4v14" stroke="#1f7244" /><path d="M0 2.500L14 0v22L0 19.500z" fill="#1f7244" /><path d="M4 7l6 8M10 7l-6 8" stroke="#fff" stroke-width="1.800" />`)}</div>
      <div class="gap"></div>
      <div class="c tray">${ic(14, 10, svg`<path d="M2 8l5-5 5 5" fill="none" stroke="#fff" stroke-width="1.300" />`)}${ic(18, 16, svg`<path d="M4 3.500h12v8H5M10 12v3M6 14.500h8M1 1.500h4v3H1zM3 5v8h3" fill="none" stroke="#fff" />`)}${ic(18, 14, svg`<path d="M1.500 5v4h2l4 3V2l-4 3zM10 5l5 5M15 5l-5 5" fill="none" stroke="#fff" />`)}</div>
      <div class="clock">10:06 AM<br />12/7/2017</div>
      <div class="c nt">${ic(30, 30, svg`<path d="M4 6h16v13h-9v4l-4-4H4z" fill="#fff" /><path d="M7 9.500h10M7 12.500h10M7 15.500h6" stroke="#111" /><circle cx="19" cy="20" r="7.500" fill="#333" stroke="#aaa" /><text x="16" y="24.500" font-size="12" font-weight="600" fill="#fff">2</text>`)}</div>
      <div class="end"></div>
    </div>`;
  }

  render() {
    return html`
      <div class="top">${this.titleBar()}${this.tabBar()}</div>
      <div class="ribbon">
        ${this.clipboard()}${this.fontGroup()}${this.alignmentGroup()}${this.numberGroup()}${this.stylesGroup()}${this.cellsGroup()}${this.editing()}
        <div class="rest">${ic(10, 7, svg`<path d="M1 6l4-4 4 4" fill="none" stroke="#666" stroke-width="1.700" />`)}</div>
      </div>
      ${this.formulaBar()}
      <div class="main"><sheet-map></sheet-map>
        <div class="vsb"><div class="sb">${ic(9, 6, svg`<path d="M1 5h7L4.500 1z" fill="#777" />`)}</div><div class="vt"></div><div class="tr"></div><div class="sb">${ic(9, 6, svg`<path d="M1 1h7L4.500 5z" fill="#777" />`)}</div></div>
      </div>
      <div class="sheets">
        <div class="row nav">${ic(6, 9, svg`<path d="M5 0v8L1 4z" fill="#bbb" />`)}${ic(6, 9, svg`<path d="M1 0v8l4-4z" fill="#bbb" />`)}</div>
        <div class="st s1">Isolines</div><div class="st s2">Sheet1</div>
        <div class="add">${ic(17, 17, svg`<circle cx="8.500" cy="8.500" r="7.500" fill="none" stroke="#777" /><path d="M8.500 4.500v8M4.500 8.500h8" stroke="#666" stroke-width="1.600" />`)}</div>
        <div class="hs"><div class="dots2">${ic(4, 15, svg`<path d="M1 1h2v2H1zM1 6h2v2H1zM1 11h2v2H1z" fill="#aaa" />`)}</div>
          <div class="sb">${ic(6, 9, svg`<path d="M5 1v7L1 4.500z" fill="#555" />`)}</div><div class="ht"></div><div class="hr"></div><div class="sb">${ic(6, 9, svg`<path d="M1 1v7l4-3.500z" fill="#555" />`)}</div></div>
      </div>
      <div class="status"><span class="rd">Ready</span>
        <div class="vb on">${ic(13, 13, svg`<path d="M.5.500h12v12H.5zM4.500 0v13M8.500 0v13M0 4.500h13M0 8.500h13" fill="none" stroke="#666" />`)}</div>
        <div class="vb">${ic(13, 13, svg`<path d="M.5.500h12v12H.5zM3.500 2.500h6v8h-6zM5 5h3M5 7h3M5 9h3" fill="none" stroke="#666" />`)}</div>
        <div class="vb">${ic(13, 13, svg`<path d="M.5.500h12v12H.5zM4.500 0v7.500M8.500 0v7.500M1 7.500h8" fill="none" stroke="#666" />`)}</div>
        <div class="zoom">${ic(127, 16, svg`<path d="M2 8h6M115 8h8M119 4v8" stroke="#555" stroke-width="2" /><path d="M12 8h100M63.500 4.500v7" stroke="#aaa" /><path d="M12 3h4v10h-4z" fill="#555" />`)}</div>
        <span>10%</span>
      </div>
      ${this.taskbar()}
    `;
  }
}
